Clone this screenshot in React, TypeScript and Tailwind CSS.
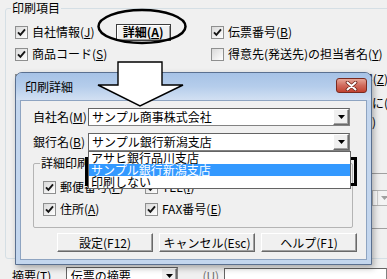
import React from "react";

function K({ c }: { c: string }) {
  return <span className="underline underline-offset-[1px]">{c}</span>;
}

function Check({ on }: { on?: boolean }) {
  return (
    <span className="w-[13px] h-[13px] shrink-0 border border-[#8e8f8f] bg-gradient-to-br from-[#d9d9d9] to-white flex items-center justify-center">
      {on && (
        <svg width="9" height="9" viewBox="0 0 9 9">
          <path d="M1 4.3 L3.4 6.8 L8 1.4" fill="none" stroke="#151515" strokeWidth="1.9" />
        </svg>
      )}
    </span>
  );
}

function Arrow({ grey }: { grey?: boolean }) {
  return (
    <svg width="7" height="4" viewBox="0 0 7 4">
      <path d="M0 0 H7 L3.5 4 Z" fill={grey ? "#a0a0a0" : "#000"} />
    </svg>
  );
}

function DropBtn() {
  return (
    <span className="w-[16px] h-full shrink-0 bg-[#f0f0f0] border border-t-white border-l-white border-r-[#6a6a6a] border-b-[#6a6a6a] shadow-[inset_-1px_-1px_0_#a0a0a0] flex items-center justify-center">
      <Arrow />
    </span>
  );
}

function Btn({ children }: { children: React.ReactNode }) {
  return (
    <div className="w-[96px] h-[19px] bg-[#f0f0f0] border border-t-white border-l-white border-r-[#696969] border-b-[#696969] shadow-[inset_-1px_-1px_0_#a0a0a0] flex items-center justify-center leading-[14px]">
      {children}
    </div>
  );
}

export default function App() {
  return (
    <div className="w-[387px] h-[279px] overflow-hidden relative bg-[#f0f0f0] text-[12px] leading-[14px] text-black font-['Noto_Sans_CJK_JP','Noto_Sans',sans-serif]">
      {/* background form */}
      <div className="ml-[5px] mt-[8px] w-[400px] h-[251px] border border-[#d5dfe5] rounded-[3px] relative">
        <span className="absolute -top-[8px] left-[5px] px-[1px] bg-[#f0f0f0] leading-[14px]">印刷項目</span>
        <div className="pt-[12px] pl-[9px]">
          <div className="grid grid-cols-[196px_177px] grid-rows-[22px_22px_26px] whitespace-nowrap">
            <div className="flex items-center gap-[4px]">
              <Check on />
              <span>自社情報(<K c="J" />)</span>
              <span className="ml-[17px] w-[55px] h-[17px] border border-[#3c3c3c] bg-[#f0f0f0] shadow-[inset_1px_1px_0_white,inset_-1px_-1px_0_#9a9a9a] flex items-center justify-center font-bold">
                詳細(<K c="A" />)
              </span>
            </div>
            <div className="flex items-center gap-[4px]">
              <Check on />
              <span>伝票番号(<K c="B" />)</span>
            </div>
            <div className="flex items-center gap-[4px]">
              <Check on />
              <span>商品コード(<K c="S" />)</span>
            </div>
            <div className="flex items-center gap-[4px]">
              <Check />
              <span>得意先(発送先)の担当者名(<K c="Y" />)</span>
            </div>
            <div className="flex items-end pb-[4px] gap-[4px]">
              <Check on />
              <span>単価(<K c="K" />)</span>
            </div>
            <div className="flex items-end pb-[5px] justify-end">
              <span>商品名を印字(<K c="Z" />)</span>
            </div>
          </div>
          <div className="ml-[357px] flex flex-col">
            <span className="mt-[5px] whitespace-nowrap">に(</span>
            <span className="mt-[5px]">)</span>
            <div className="mt-[44px] w-[20px] h-px bg-[#a0a0a0]" />
            <div className="mt-[16px] w-[20px] h-[16px] border-y border-l border-[#b5b5b5] bg-white flex">
              <span className="ml-[4px] w-[14px] h-full bg-[#f4f4f4] border-l border-[#d0d0d0] flex items-center justify-center">
                <Arrow grey />
              </span>
            </div>
            <div className="mt-[22px] w-[20px] h-px bg-[#a0a0a0]" />
          </div>
        </div>
      </div>
      <div className="mt-[8px] flex items-start whitespace-nowrap">
        <span className="pl-[12px] w-[68px] leading-[18px]">摘要(<K c="T" />)</span>
        <div className="w-[117px] h-[18px] border border-[#828282] border-t-[#646464] border-l-[#646464] bg-white flex">
          <span className="flex-1 pl-[4px] leading-[16px]">伝票の摘要</span>
          <DropBtn />
        </div>
        <span className="ml-[24px] w-[22px] leading-[18px] text-[#6d6d6d]">(<K c="U" />)</span>
        <div className="mt-[1px] w-[170px] h-[18px] border border-[#828282] border-t-[#646464] border-l-[#646464] bg-white" />
      </div>

      {/* ellipse annotation */}
      <svg className="absolute left-[96px] top-[8px]" width="92" height="38" viewBox="0 0 92 38">
        <ellipse cx="46" cy="18.5" rx="43.5" ry="16.5" fill="none" stroke="#000" strokeWidth="2.5" />
      </svg>

      {/* dialog */}
      <div className="absolute left-[15px] top-[72px] w-[357px] h-[193px] rounded-t-[7px] border border-[#5a7090] bg-[#c3d6ee] flex flex-col shadow-[2px_3px_6px_rgba(0,0,0,0.3)]">
        <div className="h-[27px] shrink-0 flex items-start pl-[9px] pr-[4px] rounded-t-[6px] bg-gradient-to-b from-[#a6c2e6] via-[#b5cdeb] to-[#d2e0f2]">
          <span className="mt-[7px]">印刷詳細</span>
          <span className="ml-auto mt-[5px] w-[31px] h-[15px] rounded-[3px] border border-[#7a2a1f] bg-gradient-to-b from-[#e6a698] via-[#d06a5c] to-[#c2412f] flex items-center justify-center">
            <svg width="13" height="10" viewBox="0 0 13 10">
              <path d="M2.5 1.5 L10.5 8.5 M10.5 1.5 L2.5 8.5" stroke="#6b2218" strokeWidth="3.6" strokeLinecap="round" />
              <path d="M2.5 1.5 L10.5 8.5 M10.5 1.5 L2.5 8.5" stroke="#fff" strokeWidth="2" strokeLinecap="round" />
            </svg>
          </span>
        </div>
        <div className="mx-[4px] mb-[4px] flex-1 bg-[#f0f0f0] border border-[#8ea4c1] flex flex-col">
          <div className="mt-[7px] flex items-center">
            <span className="pl-[12px] w-[67px]">自社名(<K c="M" />)</span>
            <div className="w-[262px] h-[18px] border border-[#828282] border-t-[#646464] border-l-[#646464] bg-white flex">
              <span className="flex-1 pl-[3px] leading-[16px]">サンプル商事株式会社</span>
              <DropBtn />
            </div>
          </div>
          <div className="mt-[7px] flex items-center relative z-10">
            <span className="pl-[12px] w-[67px]">銀行名(<K c="B" />)</span>
            <div className="w-[262px] h-[18px] border border-[#828282] border-t-[#646464] border-l-[#646464] bg-white flex relative">
              <span className="flex-1 pl-[3px] leading-[16px]">サンプル銀行新潟支店</span>
              <DropBtn />
              <div className="absolute -left-px top-[17px] w-[263px] border border-[#646464] bg-white flex flex-col leading-[12px]">
                <span className="h-[12px] pl-[2px]">アサヒ銀行品川支店</span>
                <span className="h-[12px] pl-[2px] bg-[#3399ff] text-white">サンプル銀行新潟支店</span>
                <span className="h-[12px] pl-[2px]">印刷しない</span>
              </div>
            </div>
          </div>
          <div className="mt-[12px] ml-[12px] w-[320px] h-[65px] border border-[#b4b4b4] rounded-[2px] relative">
            <span className="absolute -top-[8px] left-[6px] px-[1px] bg-[#f0f0f0]">詳細印刷</span>
            <div className="pt-[12px] pl-[9px] grid grid-cols-[102px_1fr] auto-rows-[22px] whitespace-nowrap">
              <div className="flex items-center gap-[4px]">
                <Check on />
                <span>郵便番号(<K c="P" />)</span>
              </div>
              <div className="flex items-center gap-[4px]">
                <Check on />
                <span>TEL(<K c="I" />)</span>
              </div>
              <div className="flex items-center gap-[4px]">
                <Check on />
                <span>住所(<K c="A" />)</span>
              </div>
              <div className="flex items-center gap-[4px]">
                <Check on />
                <span>FAX番号(<K c="E" />)</span>
              </div>
            </div>
          </div>
          <div className="mt-[5px] ml-[36px] flex gap-[6px]">
            <Btn>設定(F12)</Btn>
            <Btn>キャンセル(Esc)</Btn>
            <Btn>ヘルプ(F1)</Btn>
          </div>
        </div>
      </div>

      {/* arrow annotation */}
      <svg className="absolute left-[96px] top-[60px]" width="90" height="50" viewBox="0 0 90 50">
        <polygon points="22,2 66,2 66,25 87,25 44,46 2,25 22,25" fill="#fff" stroke="#000" strokeWidth="1.4" />
      </svg>

      {/* highlight box */}
      <div className="absolute left-[85px] top-[157px] w-[272px] h-[29px] border-[3px] border-black" />
    </div>
  );
}
